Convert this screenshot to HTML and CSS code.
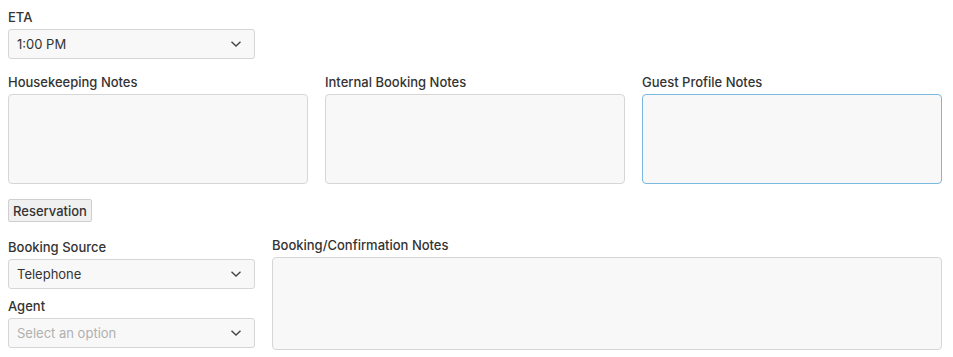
FILE: index.html
```html
<!DOCTYPE html>
<html lang="en">
<head>
<meta charset="UTF-8">
<meta name="viewport" content="width=device-width, initial-scale=1.0">
<title>Booking Details</title>
<link rel="stylesheet" href="styles.css">
</head>
<body>

<div class="form">
    <div class="field eta">
        <label>ETA</label>
        <div class="select">
            <span>1:00 PM</span>
            <svg class="chevron" viewBox="0 0 12 8" width="12" height="8"><path d="M1.5 1.8 L6 6 L10.5 1.8" fill="none" stroke="#444" stroke-width="1.4"/></svg>
        </div>
    </div>

    <div class="notes-row">
        <div class="field">
            <label>Housekeeping Notes</label>
            <textarea class="notes"></textarea>
        </div>
        <div class="field">
            <label>Internal Booking Notes</label>
            <textarea class="notes"></textarea>
        </div>
        <div class="field">
            <label>Guest Profile Notes</label>
            <textarea class="notes focused"></textarea>
        </div>
    </div>

    <button class="tab-btn">Reservation</button>

    <div class="booking-row">
        <div class="left-col">
            <div class="field">
                <label>Booking Source</label>
                <div class="select">
                    <span>Telephone</span>
                    <svg class="chevron" viewBox="0 0 12 8" width="12" height="8"><path d="M1.5 1.8 L6 6 L10.5 1.8" fill="none" stroke="#444" stroke-width="1.4"/></svg>
                </div>
            </div>
            <div class="field agent">
                <label>Agent</label>
                <div class="select">
                    <span class="placeholder">Select an option</span>
                    <svg class="chevron" viewBox="0 0 12 8" width="12" height="8"><path d="M1.5 1.8 L6 6 L10.5 1.8" fill="none" stroke="#444" stroke-width="1.4"/></svg>
                </div>
            </div>
        </div>
        <div class="field right-col">
            <label>Booking/Confirmation Notes</label>
            <textarea class="notes big"></textarea>
        </div>
    </div>
</div>

</body>
</html>
```

FILE: styles.css
```css
body {
    font-family: Inter, "Open Sans", sans-serif;
    margin: 8px;
    background-color: #fff;
    color: #333;
}
.form {
    width: 934px;
}
.field {
    display: flex;
    flex-direction: column;
}
.field label {
    font-size: 13px;
    font-weight: 500;
    line-height: 18px;
    color: #333;
    margin-bottom: 3px;
}
.eta {
    width: 247px;
}
.select {
    height: 30px;
    box-sizing: border-box;
    border: 1px solid #d6d6d6;
    border-radius: 3px;
    background-color: #f8f8f8;
    display: flex;
    align-items: center;
    justify-content: space-between;
    padding: 0 12px 0 8px;
    font-size: 13px;
    color: #333;
}
.select .placeholder {
    color: #b0b0b0;
}
.chevron {
    display: block;
}
.notes {
    box-sizing: border-box;
    height: 90px;
    border: 1px solid #d6d6d6;
    border-radius: 4px;
    background-color: #f8f8f8;
    resize: none;
    margin: 0;
    font-family: inherit;
}
.notes.focused {
    border-color: #7ab8e0;
    outline: none;
}
.notes-row {
    margin-top: 14px;
    display: grid;
    grid-template-columns: 300px 300px 300px;
    column-gap: 17px;
}
.tab-btn {
    margin-top: 15px;
    height: 23px;
    padding: 0 4px;
    font-family: inherit;
    font-size: 13px;
    font-weight: 500;
    color: #333;
    background-color: #f0f0f0;
    border: 1px solid #cfcfcf;
    border-radius: 2px;
}
.booking-row {
    margin-top: 14px;
    display: flex;
    gap: 17px;
    align-items: flex-start;
}
.left-col {
    width: 247px;
    padding-top: 2px;
}
.agent {
    margin-top: 8px;
}
.right-col {
    flex: 1;
}
.notes.big {
    height: 93px;
}
```
